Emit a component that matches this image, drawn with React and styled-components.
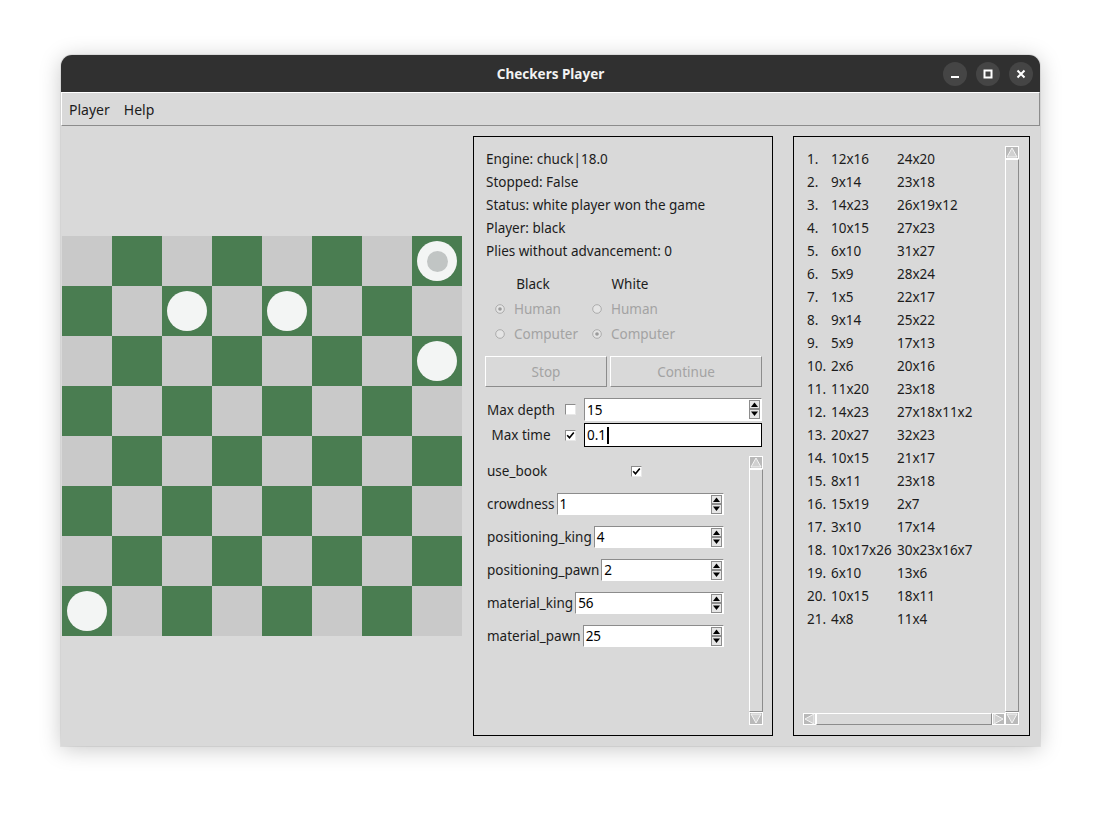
import React from "react"
import styled, { createGlobalStyle } from "styled-components"

const GlobalStyle = createGlobalStyle`
	html, body {
		margin: 0;
		padding: 0;
		background: #ffffff;
	}
	body {
		width: 1101px;
		height: 813px;
		overflow: hidden;
		font-family: "Noto Sans", "DejaVu Sans", sans-serif;
		font-size: 13.5px;
		color: #1c1c1c;
	}
`

const Desktop = styled.div`
	padding: 55px 0 0 61px;
`

const Window = styled.div`
	width: 979px;
	height: 691px;
	background: #d9d9d9;
	border-radius: 11px 11px 0 0;
	box-shadow: 0 3px 22px rgba(0, 0, 0, 0.22), 0 0 0 1px rgba(0, 0, 0, 0.07);
	display: flex;
	flex-direction: column;
	overflow: hidden;
`

const TitleBar = styled.div`
	height: 37px;
	flex: none;
	background: #303030;
	display: grid;
	grid-template-columns: 1fr auto 1fr;
	align-items: center;
`

const Title = styled.div`
	grid-column: 2;
	color: #f2f2f2;
	font-size: 13.5px;
	font-weight: 700;
`

const TitleButtons = styled.div`
	grid-column: 3;
	justify-self: end;
	display: flex;
	gap: 9px;
	padding-right: 7px;
`

const TitleButton = styled.div`
	width: 24px;
	height: 24px;
	border-radius: 50%;
	background: #454545;
	display: flex;
	align-items: center;
	justify-content: center;
`

const MenuBar = styled.div`
	height: 32px;
	flex: none;
	border-top: 1px solid #ffffff;
	border-left: 1px solid #ffffff;
	border-right: 1px solid #8c8c8c;
	border-bottom: 1px solid #8c8c8c;
	display: flex;
	align-items: center;
	gap: 14px;
	padding-left: 7px;
`

const MenuItem = styled.span`
	font-size: 14px;
	color: #1c1c1c;
`

const Content = styled.div`
	flex: 1;
	display: flex;
	align-items: flex-start;
`

const BoardArea = styled.div`
	width: 411px;
	height: 620px;
	padding-left: 1px;
	display: flex;
	align-items: center;
	flex: none;
`

const Board = styled.div`
	display: grid;
	grid-template-columns: repeat(8, 50px);
	grid-template-rows: repeat(8, 50px);
`

const Square = styled.div`
	background: ${(p) => (p.$dark ? "#4a7d51" : "#c9c9c9")};
	display: flex;
	align-items: center;
	justify-content: center;
`

const Piece = styled.div`
	width: 40px;
	height: 40px;
	border-radius: 50%;
	background: #f3f5f4;
	display: flex;
	align-items: center;
	justify-content: center;
`

const Crown = styled.div`
	width: 21px;
	height: 21px;
	border-radius: 50%;
	background: #c1c5c4;
`

const Panel = styled.div`
	margin-top: 10px;
	height: 598px;
	border: 1px solid #000000;
	flex: none;
`

const ControlPanel = styled(Panel)`
	width: 298px;
	display: flex;
	flex-direction: column;
`

const InfoLines = styled.div`
	padding: 11px 0 0 12px;
`

const InfoLine = styled.div`
	line-height: 23px;
	white-space: nowrap;
`

const PlayerGrid = styled.div`
	margin: 9px 0 0 21px;
	display: grid;
	grid-template-columns: 84px 84px;
	grid-template-rows: 24px 25px 25px;
	column-gap: 13px;
	align-items: center;
`

const ColumnHead = styled.div`
	text-align: center;
	padding-right: 8px;
`

const RadioOption = styled.div`
	display: flex;
	align-items: center;
	gap: 9px;
	color: #a3a3a3;
	white-space: nowrap;

	svg {
		flex: none;
	}
`

const ButtonRow = styled.div`
	margin: 10px 0 0 11px;
	display: flex;
	gap: 3px;
`

const PushButton = styled.div`
	width: ${(p) => p.$width}px;
	height: 29px;
	border: 1px solid;
	border-color: #ffffff #8c8c8c #8c8c8c #ffffff;
	color: #a3a3a3;
	display: flex;
	align-items: center;
	justify-content: center;
`

const LimitGrid = styled.div`
	margin: 11px 0 0 12px;
	display: grid;
	grid-template-columns: 70px 28px 178px;
	grid-template-rows: 23px 24px;
	row-gap: 2px;
	align-items: center;
`

const LimitLabel = styled.div`
	text-align: center;
	white-space: nowrap;
`

const CheckCell = styled.div`
	justify-self: center;
	display: flex;
`

const CheckBox = styled.div`
	width: 9px;
	height: 9px;
	background: #ffffff;
	border: 1px solid;
	border-color: #8c8c8c #e8e8e8 #e8e8e8 #8c8c8c;
	display: flex;
	align-items: center;
	justify-content: center;
`

const SpinBox = styled.div`
	height: ${(p) => p.$height || 21}px;
	box-sizing: border-box;
	background: #ffffff;
	border: 1px solid;
	border-color: #8c8c8c #ffffff #ffffff #8c8c8c;
	display: flex;
	align-items: center;
	flex: ${(p) => (p.$grow ? 1 : "none")};
	min-width: 0;
	padding-left: 2px;
`

const SpinValue = styled.span`
	flex: 1;
	color: #000000;
`

const SpinArrows = styled.div`
	width: 11px;
	height: 19px;
	flex: none;
	margin-right: 1px;
	display: flex;
`

const FocusEntry = styled.div`
	height: 24px;
	box-sizing: border-box;
	background: #ffffff;
	border: 1px solid #000000;
	display: flex;
	align-items: center;
	padding-left: 2px;
	color: #000000;
`

const Caret = styled.span`
	width: 2px;
	height: 17px;
	background: #000000;
	margin-left: 1px;
`

const ParamsArea = styled.div`
	margin: 9px 9px 10px 13px;
	flex: 1;
	display: flex;
`

const ParamList = styled.div`
	width: 237px;
	padding-top: 4px;
	display: flex;
	flex-direction: column;
	gap: 11px;
`

const ParamRow = styled.div`
	height: 22px;
	display: flex;
	align-items: center;
	gap: 2px;
	white-space: nowrap;
`

const ParamCheck = styled.div`
	flex: 1;
	display: flex;
	justify-content: center;
`

const ParamsScroll = styled.div`
	margin-left: auto;
	width: 14px;
	display: flex;
	flex-direction: column;
`

const HistoryPanel = styled(Panel)`
	margin-left: 20px;
	display: grid;
	grid-template-columns: 1fr 14px;
	grid-template-rows: 1fr 12px;
	padding: 9px 10px 10px 9px;
	box-sizing: content-box;
	height: 579px;
	width: 216px;
`

const MoveList = styled.div`
	padding: 2px 0 0 4px;
	overflow: hidden;
`

const MoveRow = styled.div`
	display: grid;
	grid-template-columns: 24px 66px auto;
	line-height: 23px;
	white-space: nowrap;
`

const VScroll = styled.div`
	grid-row: 1 / 3;
	grid-column: 2;
	display: flex;
	flex-direction: column;
`

const HScroll = styled.div`
	grid-row: 2;
	grid-column: 1;
	display: flex;
`

const Slider = styled.div`
	flex: 1;
	border: 1px solid;
	border-color: #ffffff #8c8c8c #8c8c8c #ffffff;
	background: #d9d9d9;
`

const ArrowBox = styled.div`
	flex: none;
	width: ${(p) => (p.$horizontal ? 13 : 14)}px;
	height: ${(p) => (p.$horizontal ? 12 : 13)}px;
	display: flex;
`

function Arrow({ dir, horizontal }) {
	const shapes = {
		up: "2,11 7,2 12,11",
		down: "2,2 7,11 12,2",
		left: "11,1 2,6 11,11",
		right: "2,1 11,6 2,11",
	}
	const w = horizontal ? 13 : 14
	const h = horizontal ? 12 : 13
	return (
		<ArrowBox $horizontal={horizontal}>
			<svg width={w} height={h} viewBox={`0 0 ${w} ${h}`}>
				<rect x="0" y="0" width={w} height={h} fill="#b9b9b9" />
				<rect x="0.5" y="0.5" width={w - 1} height={h - 1} fill="none" stroke="#ffffff" strokeWidth="1" />
				<polygon points={shapes[dir]} fill="#d0d0d0" stroke="#f4f4f4" strokeWidth="1" />
			</svg>
		</ArrowBox>
	)
}

function Radio({ checked }) {
	return (
		<svg width="10" height="10" viewBox="0 0 10 10">
			<circle cx="5" cy="5" r="4.3" fill="#e4e4e4" stroke="#a6a6a6" strokeWidth="0.9" />
			{checked ? <circle cx="5" cy="5" r="1.8" fill="#9a9a9a" /> : null}
		</svg>
	)
}

function Check({ checked }) {
	return (
		<CheckBox>
			{checked ? (
				<svg width="9" height="9" viewBox="0 0 9 9">
					<path d="M1.2 4.2 L3.5 6.8 L7.8 1.4" fill="none" stroke="#000" strokeWidth="1.6" />
				</svg>
			) : null}
		</CheckBox>
	)
}

function Spin({ value, grow, height }) {
	return (
		<SpinBox $grow={grow} $height={height}>
			<SpinValue>{value}</SpinValue>
			<SpinArrows>
				<svg width="11" height="19" viewBox="0 0 11 19">
					<rect x="0.5" y="0.5" width="10" height="8" fill="#e6e6e6" stroke="#8c8c8c" strokeWidth="1" />
					<rect x="0.5" y="9.5" width="10" height="9" fill="#e6e6e6" stroke="#8c8c8c" strokeWidth="1" />
					<polygon points="2,7 5.5,2.5 9,7" fill="#000" />
					<polygon points="2,11.5 5.5,16 9,11.5" fill="#000" />
				</svg>
			</SpinArrows>
		</SpinBox>
	)
}

const pieces = {
	"0-7": "king",
	"1-2": "man",
	"1-4": "man",
	"2-7": "man",
	"7-0": "man",
}

const moves = [
	["12x16", "24x20"],
	["9x14", "23x18"],
	["14x23", "26x19x12"],
	["10x15", "27x23"],
	["6x10", "31x27"],
	["5x9", "28x24"],
	["1x5", "22x17"],
	["9x14", "25x22"],
	["5x9", "17x13"],
	["2x6", "20x16"],
	["11x20", "23x18"],
	["14x23", "27x18x11x2"],
	["20x27", "32x23"],
	["10x15", "21x17"],
	["8x11", "23x18"],
	["15x19", "2x7"],
	["3x10", "17x14"],
	["10x17x26", "30x23x16x7"],
	["6x10", "13x6"],
	["10x15", "18x11"],
	["4x8", "11x4"],
]

const params = [
	["crowdness", "1"],
	["positioning_king", "4"],
	["positioning_pawn", "2"],
	["material_king", "56"],
	["material_pawn", "25"],
]

function CheckersBoard() {
	const squares = []
	for (let r = 0; r < 8; r++) {
		for (let c = 0; c < 8; c++) {
			const kind = pieces[`${r}-${c}`]
			squares.push(
				<Square key={`${r}-${c}`} $dark={(r + c) % 2 === 1}>
					{kind ? <Piece>{kind === "king" ? <Crown /> : null}</Piece> : null}
				</Square>
			)
		}
	}
	return <Board>{squares}</Board>
}

function App() {
	return (
		<>
			<GlobalStyle />
			<Desktop>
				<Window>
					<TitleBar>
						<Title>Checkers Player</Title>
						<TitleButtons>
							<TitleButton>
								<svg width="10" height="10" viewBox="0 0 10 10">
									<rect x="1" y="7" width="8" height="2" fill="#fff" />
								</svg>
							</TitleButton>
							<TitleButton>
								<svg width="10" height="10" viewBox="0 0 10 10">
									<rect x="1.5" y="1.5" width="7" height="7" fill="none" stroke="#fff" strokeWidth="2" />
								</svg>
							</TitleButton>
							<TitleButton>
								<svg width="10" height="10" viewBox="0 0 10 10">
									<path d="M1.5 1.5 L8.5 8.5 M8.5 1.5 L1.5 8.5" stroke="#fff" strokeWidth="2" />
								</svg>
							</TitleButton>
						</TitleButtons>
					</TitleBar>
					<MenuBar>
						<MenuItem>Player</MenuItem>
						<MenuItem>Help</MenuItem>
					</MenuBar>
					<Content>
						<BoardArea>
							<CheckersBoard />
						</BoardArea>
						<ControlPanel>
							<InfoLines>
								<InfoLine>Engine: chuck|18.0</InfoLine>
								<InfoLine>Stopped: False</InfoLine>
								<InfoLine>Status: white player won the game</InfoLine>
								<InfoLine>Player: black</InfoLine>
								<InfoLine>Plies without advancement: 0</InfoLine>
							</InfoLines>
							<PlayerGrid>
								<ColumnHead>Black</ColumnHead>
								<ColumnHead>White</ColumnHead>
								<RadioOption>
									<Radio checked />
									Human
								</RadioOption>
								<RadioOption>
									<Radio />
									Human
								</RadioOption>
								<RadioOption>
									<Radio />
									Computer
								</RadioOption>
								<RadioOption>
									<Radio checked />
									Computer
								</RadioOption>
							</PlayerGrid>
							<ButtonRow>
								<PushButton $width={120}>Stop</PushButton>
								<PushButton $width={150}>Continue</PushButton>
							</ButtonRow>
							<LimitGrid>
								<LimitLabel>Max depth</LimitLabel>
								<CheckCell>
									<Check />
								</CheckCell>
								<Spin value="15" height={23} />
								<LimitLabel>Max time</LimitLabel>
								<CheckCell>
									<Check checked />
								</CheckCell>
								<FocusEntry>
									0.1
									<Caret />
								</FocusEntry>
							</LimitGrid>
							<ParamsArea>
								<ParamList>
									<ParamRow>
										use_book
										<ParamCheck>
											<Check checked />
										</ParamCheck>
									</ParamRow>
									{params.map(([name, value]) => (
										<ParamRow key={name}>
											{name}
											<Spin value={value} grow height={22} />
										</ParamRow>
									))}
								</ParamList>
								<ParamsScroll>
									<Arrow dir="up" />
									<Slider />
									<Arrow dir="down" />
								</ParamsScroll>
							</ParamsArea>
						</ControlPanel>
						<HistoryPanel>
							<MoveList>
								{moves.map(([a, b], i) => (
									<MoveRow key={i}>
										<span>{i + 1}.</span>
										<span>{a}</span>
										<span>{b}</span>
									</MoveRow>
								))}
							</MoveList>
							<VScroll>
								<Arrow dir="up" />
								<Slider />
								<Arrow dir="down" />
							</VScroll>
							<HScroll>
								<Arrow dir="left" horizontal />
								<Slider />
								<Arrow dir="right" horizontal />
							</HScroll>
						</HistoryPanel>
					</Content>
				</Window>
			</Desktop>
		</>
	)
}

export default App
